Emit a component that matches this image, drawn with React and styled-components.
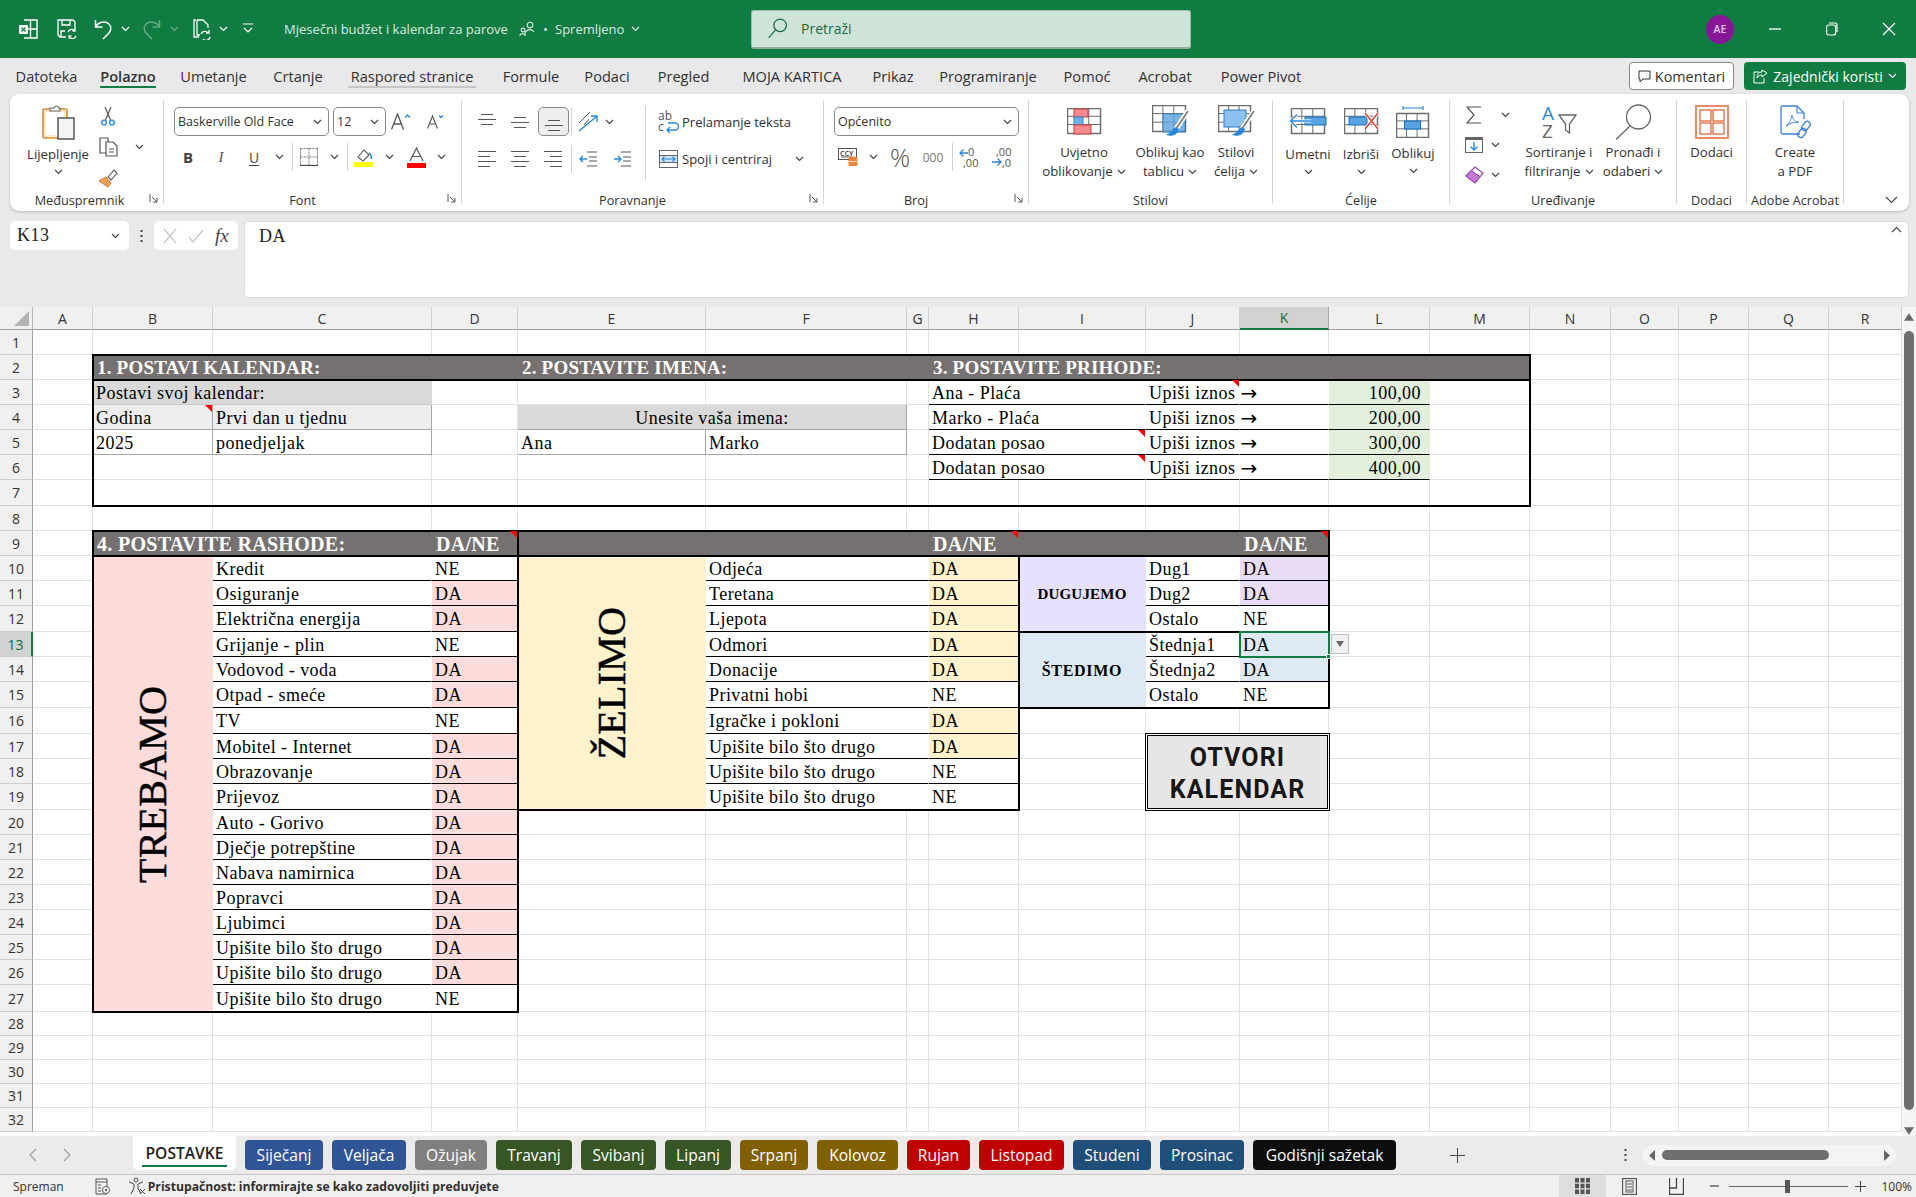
import React from 'react';
import styled, { createGlobalStyle } from 'styled-components';

const UI = '"Open Sans","Noto Sans",sans-serif';
const SERIF = '"Liberation Serif",serif';
const BLUE = '#2b88d8';

const Global = createGlobalStyle`
  html, body { margin: 0; padding: 0; height: 100%; overflow: hidden; background: #e9e8eb; }
  body { font-family: ${UI}; color: #252423; }
  #root { height: 100%; }
  svg { flex-shrink: 0; display: block; }
`;

const Page = styled.div`display:flex;flex-direction:column;width:1916px;height:1197px;background:#e9e8eb;overflow:hidden;`;

/* ---------- title bar ---------- */
const TitleBar = styled.header`flex:0 0 58px;display:flex;align-items:center;background:#107c41;color:#fff;`;
const TitleLeft = styled.div`flex:0 0 751px;display:flex;align-items:center;height:100%;padding-left:10px;box-sizing:border-box;`;
const Slot = styled.div`
  flex:0 0 ${p => p.$w}px;width:${p => p.$w}px;height:${p => p.$h ? p.$h + 'px' : '100%'};
  margin-left:${p => p.$ml || 0}px;display:flex;align-items:center;justify-content:center;box-sizing:border-box;
  ${p => p.$sel ? 'background:#eeeeee;border:1px solid #8a8886;border-radius:5px;' : ''}
  ${p => p.$on ? 'background:#dedede;' : ''}
`;
const DocTitle = styled.span`font-size:13px;color:#dcebe2;white-space:nowrap;margin-left:${p => p.$ml || 0}px;width:${p => p.$w}px;flex:0 0 ${p => p.$w}px;`;
const SearchBox = styled.div`flex:0 0 440px;height:39px;display:flex;align-items:center;gap:13px;padding-left:15px;box-sizing:border-box;background:#cfe4d9;border:1px solid #9dbdab;border-bottom:2px solid #8fb09d;border-radius:3px;font-size:14px;color:#1c6b44;`;
const TitleRight = styled.div`flex:1;display:flex;justify-content:flex-end;height:100%;`;
const Avatar = styled.div`width:28px;height:29px;border-radius:50%;background:#881798;color:#e6c9ea;font-size:10.5px;font-weight:600;display:flex;align-items:center;justify-content:center;`;

/* ---------- ribbon tabs ---------- */
const TabsRow = styled.nav`flex:0 0 36px;display:flex;align-items:center;padding-left:5px;padding-right:10px;box-sizing:border-box;`;
const RibTab = styled.div`flex:0 0 ${p => p.$w}px;display:flex;justify-content:center;font-size:14.6px;line-height:20px;white-space:nowrap;color:#323130;`;
const RibTabLabel = styled.span`
  position:relative;font-weight:${p => p.$on ? 600 : 400};
  ${p => p.$on || p.$hover ? `&::after{content:"";position:absolute;left:${p.$hover ? -3 : 0}px;right:${p.$hover ? -3 : 0}px;bottom:-2px;height:2px;background:${p.$on ? '#107c41' : '#c8c6c4'};}` : ''}
`;
const TabActions = styled.div`margin-left:auto;display:flex;gap:10px;`;
const CommentBtn = styled.div`width:105px;height:28px;box-sizing:border-box;background:#fff;border:1px solid #8a8886;border-radius:4px;display:flex;align-items:center;justify-content:center;gap:4px;font-size:14.4px;color:#323130;`;
const ShareBtn = styled.div`width:162px;height:28px;box-sizing:border-box;background:#107c41;border-radius:4px;display:flex;align-items:center;justify-content:center;gap:5px;font-size:14px;color:#fff;white-space:nowrap;`;

/* ---------- ribbon ---------- */
const Ribbon = styled.section`flex:0 0 117px;margin:0 7px 0 10px;background:#fff;border-radius:9px;box-shadow:0 1px 3px rgba(0,0,0,.22);display:flex;padding-top:6px;box-sizing:border-box;`;
const Group = styled.div`position:relative;flex:0 0 ${p => p.$w}px;height:104px;box-sizing:border-box;border-right:1px solid #d6d6d6;display:flex;flex-direction:column;`;
const GroupBody = styled.div`flex:1;display:flex;padding-left:${p => p.$pl || 0}px;gap:${p => p.$gap || 0}px;min-height:0;`;
const GroupLabel = styled.div`height:14px;line-height:14px;margin-bottom:-3px;padding-right:${p => p.$pr || 0}px;text-align:center;font-size:12.7px;color:#323130;white-space:nowrap;`;
const Launcher = styled.span`position:absolute;right:4px;bottom:0;`;
const Stack = styled.div`display:flex;flex-direction:column;gap:${p => p.$gap || 0}px;padding-top:${p => p.$pt || 0}px;width:${p => p.$w ? p.$w + 'px' : 'auto'};`;
const Line = styled.div`display:flex;align-items:center;height:${p => p.$h || 30}px;`;
const Sep = styled.div`flex:0 0 1px;width:1px;height:${p => p.$h || 28}px;margin:${p => p.$m || '0'};background:#d3d3d3;align-self:${p => p.$self || 'center'};`;
const Combo = styled.div`flex:0 0 ${p => p.$w}px;height:29px;box-sizing:border-box;margin-left:${p => p.$ml || 0}px;border:1px solid #8a8886;border-radius:5px;background:#fff;display:flex;align-items:center;justify-content:space-between;padding:0 6px 0 3px;font-size:12.5px;color:#323130;white-space:nowrap;`;
const Big = styled.div`flex:0 0 ${p => p.$w}px;width:${p => p.$w}px;display:flex;flex-direction:column;align-items:center;`;
const BigIcon = styled.div`height:43px;display:flex;align-items:center;justify-content:center;`;
const BigText = styled.div`height:${p => p.$lh || 19}px;line-height:${p => p.$lh || 19}px;margin-top:${p => p.$mt || 0}px;font-size:13.2px;white-space:nowrap;color:#323130;display:flex;align-items:center;gap:4px;`;
const SmallText = styled.span`font-size:13px;color:#323130;white-space:nowrap;flex:0 0 ${p => p.$w}px;`;
const CollapseArea = styled.div`flex:1;height:104px;display:flex;align-items:flex-end;justify-content:flex-end;padding:0 11px 5px 0;`;

/* ---------- formula bar ---------- */
const FormulaRow = styled.section`flex:0 0 77px;margin:10px 7px 9px 10px;display:flex;gap:5px;`;
const NameBox = styled.div`flex:0 0 119px;height:29px;box-sizing:border-box;background:#fff;border-radius:5px;display:flex;align-items:center;justify-content:space-between;padding:0 9px 0 7px;font:18px ${SERIF};letter-spacing:.45px;color:#222;`;
const FxDots = styled.div`flex:0 0 15px;height:29px;display:flex;align-items:center;justify-content:center;`;
const FxBox = styled.div`flex:0 0 84px;height:29px;box-sizing:border-box;background:#fff;border-radius:5px;display:flex;align-items:center;justify-content:space-around;padding:0 4px;`;
const FxMark = styled.span`font:italic 19px ${SERIF};color:#444;`;
const FormulaInput = styled.div`flex:1;margin-left:1px;background:#fff;border:1px solid #dcdcdc;border-radius:5px;display:flex;align-items:flex-start;justify-content:space-between;padding:4px 6px 0 14px;font:18px ${SERIF};color:#222;box-sizing:border-box;letter-spacing:.45px;`;

/* ---------- sheet ---------- */
const SheetArea = styled.main`flex:0 0 829px;display:flex;background:#fff;`;
const COLS = [33, 60, 120, 219, 86, 188, 201, 22, 90, 127, 94, 89, 101, 100, 81, 68, 70, 80, 73];
const ROWS = [25, 25, 25, 25, 25, 25, 26, 25, 25, 25, 25, 26, 25, 25, 26, 26, 25, 25, 26, 25, 25, 25, 25, 25, 25, 25, 27, 24, 24, 24, 24, 24];
const Sheet = styled.div`
  flex:0 0 1902px;display:grid;overflow:hidden;
  grid-template-columns:${COLS.map(c => c + 'px').join(' ')};
  grid-template-rows:23px ${ROWS.map(r => r + 'px').join(' ')} 1fr;
`;
const Corner = styled.div`grid-area:1 / 1 / 2 / 2;background:#f0f0f0;border-right:1px solid #b5b5b5;border-bottom:1px solid #9e9e9e;display:flex;align-items:flex-end;justify-content:flex-end;padding:0 3px 3px 0;box-sizing:border-box;`;
const ColHead = styled.div`
  background:${p => p.$sel ? '#d2d2d2' : '#f0f0f0'};border-right:1px solid ${p => p.$sel ? '#a8a8a8' : '#cfcfcf'};
  border-bottom:${p => p.$sel ? '2px solid #107c41' : '1px solid #9e9e9e'};box-sizing:border-box;
  display:flex;align-items:center;justify-content:center;font-size:14px;color:${p => p.$sel ? '#0e6b38' : '#333'};
`;
const RowHead = styled.div`
  background:${p => p.$sel ? '#d2d2d2' : '#f0f0f0'};border-right:${p => p.$sel ? '2px solid #107c41' : '1px solid #9e9e9e'};
  border-bottom:1px solid #cfcfcf;box-sizing:border-box;display:flex;align-items:center;justify-content:center;
  font-size:14px;color:${p => p.$sel ? '#0e6b38' : '#333'};
`;
const Cell = styled.div`
  position:relative;box-sizing:border-box;min-width:0;display:flex;align-items:center;white-space:nowrap;
  background:${p => p.$bg || '#fff'};color:${p => p.$fg || '#000'};
  border-right:1px solid ${p => p.$br || (p.$bg ? 'transparent' : '#e1e1e1')};
  border-bottom:1px solid ${p => p.$bb || (p.$bg ? 'transparent' : '#e1e1e1')};
  justify-content:${p => p.$j || 'flex-start'};
  padding:${p => p.$pad || '0 3px'};
  padding-top:2px;
  font:${p => p.$bold ? 'bold' : 'normal'} ${p => p.$size || 18}px ${SERIF};
  letter-spacing:${p => p.$ls ?? 0.45}px;
`;
const Comment = styled.i`position:absolute;top:0;right:0;z-index:3;width:0;height:0;border-left:7px solid transparent;border-top:7px solid #f00;`;
const Frame = styled.div`margin:-1px;border:2px solid #000;z-index:2;pointer-events:none;`;
const Rotated = styled.span`writing-mode:vertical-rl;transform:rotate(180deg);font-size:40px;letter-spacing:.2px;line-height:1;-webkit-text-stroke:.5px #000;`;
const AmountHint = styled.span`display:flex;align-items:center;gap:5px;`;
const ArrowGlyph = styled.span`font:20px/1 "DejaVu Sans",sans-serif;letter-spacing:0;`;
const Selection = styled.div`position:relative;margin:-1px -1px -1px -1px;border:2px solid #107c41;z-index:4;pointer-events:none;&::after{content:"";position:absolute;right:-3px;bottom:-3px;width:5px;height:5px;background:#107c41;border:1px solid #fff;box-sizing:border-box;}`;
const DropBtn = styled.div`position:absolute;left:calc(100% + 3px);top:1px;width:18px;height:20px;box-sizing:border-box;background:#f0f0f0;border:1px solid #bdbdbd;display:flex;align-items:center;justify-content:center;`;
const Shape = styled.div`margin:-1px -1px -1px -1px;padding-top:3px;box-sizing:border-box;z-index:2;background:#e7e6e6;border:1px solid #000;box-shadow:inset 0 0 0 1px #fff,inset 0 0 0 2px #000;display:flex;flex-direction:column;align-items:center;justify-content:center;font:700 25px/32px Roboto,sans-serif;letter-spacing:1.1px;color:#161616;text-align:center;`;
const VScroll = styled.aside`flex:0 0 14px;background:#f6f5f5;display:flex;flex-direction:column;align-items:center;padding:5px 0 0;box-sizing:border-box;height:829px;`;
const VThumb = styled.div`width:10px;margin:9px 0 16px;flex:1;background:#6f6f6f;border-radius:5px;`;

/* ---------- sheet tabs ---------- */
const TabBar = styled.div`flex:0 0 38px;display:flex;align-items:flex-start;background:#ecebea;`;
const ArrowWell = styled.div`flex:0 0 133px;height:100%;display:flex;align-items:center;padding-left:29px;gap:26px;box-sizing:border-box;`;
const ActiveTab = styled.div`flex:0 0 103px;height:34px;box-sizing:border-box;background:#fff;border-radius:0 0 5px 5px;display:flex;align-items:center;justify-content:center;font-size:15.6px;font-weight:600;color:#222;position:relative;&::after{content:"";position:absolute;left:9px;right:9px;bottom:3px;height:2px;background:#107c41;}`;
const ColorTabs = styled.div`display:flex;gap:9px;margin:4px 0 0 9px;`;
const ColorTab = styled.div`flex:0 0 ${p => p.$w}px;height:30px;border-radius:4px;background:${p => p.$c};color:#fff;font-size:15.6px;display:flex;align-items:center;justify-content:center;white-space:nowrap;`;
const TabTail = styled.div`flex:1;height:100%;display:flex;align-items:center;`;
const HScroll = styled.div`width:253px;height:21px;border-radius:11px;background:#f5f4f4;display:flex;align-items:center;justify-content:space-between;padding:0 6px;box-sizing:border-box;gap:4px;margin-left:16px;`;
const HThumb = styled.div`width:167px;height:10px;border-radius:5px;background:#6f6f6f;margin-right:auto;margin-left:3px;`;

/* ---------- status ---------- */
const StatusBar = styled.footer`flex:0 0 23px;display:flex;align-items:center;background:#f1f0f0;border-top:1px solid #c8c6c4;box-sizing:border-box;font-size:12px;color:#323130;`;
const StatusText = styled.span`white-space:nowrap;font-weight:${p => p.$b ? 700 : 400};font-size:${p => p.$b ? 12.2 : 12}px;margin-left:${p => p.$ml || 0}px;`;
const StatusRight = styled.div`margin-left:auto;display:flex;align-items:center;height:100%;padding-right:4px;`;
const ZoomTrack = styled.div`position:relative;width:119px;height:1px;background:#666;margin:0 5px;&::after{content:"";position:absolute;left:56px;top:-6px;width:5px;height:13px;background:#555;}`;

/* ---------- icons ---------- */
const Chev = ({ c = '#444' }) => <svg width="9" height="6" viewBox="0 0 9 6"><path d="M1 1l3.5 3.5L8 1" fill="none" stroke={c} strokeWidth="1.2" /></svg>;
const LaunchIcon = () => <svg width="10" height="10" viewBox="0 0 10 10"><path d="M1 0v8M3 3l5 5M8 4v4H4" fill="none" stroke="#555" strokeWidth="1" /></svg>;
const XlLogo = () => <svg width="19" height="20" viewBox="0 0 19 20" fill="none" stroke="#fff" strokeWidth="1.4"><path d="M5 1h13v18H5M11.5 1v18M5 10h13" /><rect x="0" y="6" width="9" height="9" rx="1" fill="#fff" stroke="none" /><path d="M2.5 8.5l4 4m0-4l-4 4" stroke="#107c41" strokeWidth="1.2" /></svg>;
const SaveSync = () => <svg width="20" height="20" viewBox="0 0 20 20" fill="none" stroke="#fff" strokeWidth="1.3"><path d="M9 18H3L1 16V1h15l2 2v7M5 1v5h8V1M4 18v-6h4" /><path d="M11 13a4 4 0 0 1 7-1M19 17a4 4 0 0 1-7 1M18 9.5V12h-2.5M12 19.5V17h2.5" /></svg>;
const Undo = () => <svg width="18" height="21" viewBox="0 0 18 21" fill="none" stroke="#fff" strokeWidth="1.5"><path d="M1.5 1v7h7M1.5 8C4 3 11 1.5 15 5c3 3 2 7-.5 9.5L9 20" /></svg>;
const Redo = ({ o = 1 }) => <svg width="18" height="21" viewBox="0 0 18 21" fill="none" stroke="#fff" strokeWidth="1.5" opacity={o}><path d="M16.5 1v7h-7M16.5 8C14 3 7 1.5 3 5c-3 3-2 7 .5 9.5L9 20" /></svg>;
const NewSync = () => <svg width="18" height="21" viewBox="0 0 18 21" fill="none" stroke="#fff" strokeWidth="1.3"><path d="M3 1H1v17h5M4 1h6l5 5v3M4 1v15h3" /><path d="M8 15a4 4 0 0 1 7-1M17 18a4 4 0 0 1-7 2M16 11v3h-3" /></svg>;
const CustomQ = () => <svg width="12" height="12" viewBox="0 0 12 12" fill="none" stroke="#fff" strokeWidth="1.2"><path d="M1 1h10M2 5l4 4 4-4" /></svg>;
const Coauthor = () => <svg width="16" height="16" viewBox="0 0 16 16" fill="none" stroke="#dcebe2" strokeWidth="1.1"><circle cx="11" cy="4" r="2.8" /><path d="M6 14v-2a5 5 0 0 1 9-1" /><circle cx="4" cy="9" r="1.9" /><path d="M1 15v-1a3 3 0 0 1 5 0v1" /></svg>;
const Magnifier = () => <svg width="21" height="21" viewBox="0 0 20 20" fill="none" stroke="#1c6b44" strokeWidth="1.2"><circle cx="12.5" cy="7" r="6" /><path d="M8 11.5L1.5 19" /></svg>;
const FindIc = () => <svg width="38" height="36" viewBox="0 0 38 36" fill="none" stroke="#666" strokeWidth="1.3"><circle cx="24.5" cy="13" r="12" /><path d="M16 22L2 35.5" /></svg>;
const WinMin = () => <svg width="12" height="2" viewBox="0 0 12 2"><path d="M0 1h12" stroke="#fff" strokeWidth="1.3" /></svg>;
const WinRestore = () => <svg width="12" height="14" viewBox="0 0 12 14" fill="none" stroke="#fff" strokeWidth="1.2"><rect x=".6" y="3" width="9" height="10" rx="2" /><path d="M3 1h6a2 2 0 0 1 2 2v7" /></svg>;
const WinClose = () => <svg width="14" height="14" viewBox="0 0 14 14"><path d="M1 1l12 12M13 1L1 13" stroke="#fff" strokeWidth="1.2" /></svg>;
const CommentIc = () => <svg width="13" height="13" viewBox="0 0 13 13" fill="none" stroke="#323130" strokeWidth="1"><path d="M1 1h11v8H5l-3 3V9H1z" /></svg>;
const ShareIc = () => <svg width="15" height="15" viewBox="0 0 15 15" fill="none" stroke="#fff" strokeWidth="1"><path d="M6 3H1v11h10V9M14 4L9 1v2c-3 0-5 2-5 6 1-2 3-3 5-3v2z" /></svg>;

const PasteIc = () => <svg width="33" height="36" viewBox="0 0 33 36"><rect x="1" y="5" width="24" height="29" rx="1" fill="#fde9c9" stroke="#d88b36" strokeWidth="1.6" /><rect x="4" y="8" width="18" height="23" fill="#fff" /><path d="M8 6V4h4.5a2 2 0 0 1 4 0H18v3H8z" fill="#fff" stroke="#666" strokeWidth="1.1" /><rect x="16" y="14" width="16" height="21" fill="#f4f4f4" stroke="#555" strokeWidth="1.5" /></svg>;
const ScissorsIc = () => <svg width="16" height="20" viewBox="0 0 16 20" fill="none"><path d="M5 1l5.5 13M11 1L5.5 14" stroke="#555" strokeWidth="1.2" /><circle cx="4" cy="16.5" r="2.4" stroke={BLUE} strokeWidth="1.4" /><circle cx="12" cy="16.5" r="2.4" stroke={BLUE} strokeWidth="1.4" /></svg>;
const CopyIc = () => <svg width="19" height="20" viewBox="0 0 19 20" fill="none" stroke="#555" strokeWidth="1.2"><path d="M7 16H1V1h8v4" /><path d="M7 5h7l4 4v10H7zM10 12h5M10 15h5" /></svg>;
const BrushIc = () => <svg width="20" height="20" viewBox="0 0 20 20"><path d="M1 13l7-4 5 6-3 4z" fill="#f0a15a" stroke="#d9782a" strokeWidth="1" /><path d="M10 9l6-7 3 3-6 7z" fill="#fff" stroke="#555" strokeWidth="1.1" /></svg>;
const GrowA = ({ up }) => up
  ? <svg width="20" height="17" viewBox="0 0 20 17" fill="none"><path d="M.5 16.5L6.5 1l6 15.5M3 11h7" stroke="#555" strokeWidth="1.3" /><path d="M14 4.5l2.5-2.5 2.5 2.5" stroke={BLUE} strokeWidth="1.3" /></svg>
  : <svg width="17" height="15" viewBox="0 0 17 15" fill="none"><path d="M.5 14.5L5.5 2l5 12.5M2.5 10h6" stroke="#555" strokeWidth="1.2" /><path d="M12 1.5l2 2 2-2" stroke={BLUE} strokeWidth="1.3" /></svg>;
const Bold = styled.span`font:700 15px ${UI};color:#444;`;
const Ital = styled.span`font:italic 15px ${SERIF};color:#555;`;
const Under = styled.span`font:14px ${UI};color:#444;text-decoration:underline;text-underline-offset:2px;`;
const BorderIc = () => <svg width="18" height="18" viewBox="0 0 18 18" fill="none" stroke="#777" strokeWidth="1" strokeDasharray="2 1"><path d="M.5.5h17M.5.5v17M17.5.5v17M9 .5v17M.5 9h17" /><path d="M0 17.5h18" stroke="#444" strokeDasharray="none" strokeWidth="1.2" /></svg>;
const FillIc = () => <svg width="20" height="20" viewBox="0 0 20 20" fill="none"><path d="M4 10l6-7 5 5-6 6z" stroke="#555" strokeWidth="1.1" /><path d="M15 6c2 1 3 4 2 6" stroke={BLUE} strokeWidth="1.5" /><rect x="0" y="15" width="19" height="5" fill="#ffff00" /></svg>;
const FontColorIc = () => <svg width="20" height="21" viewBox="0 0 20 21" fill="none"><path d="M3 14L9.5 1 16 14M5.5 9.5h8" stroke="#555" strokeWidth="1.2" /><rect x="0" y="16" width="19" height="5" fill="#f00" /></svg>;
const AlignV = ({ pos }) => { const o = pos === 0 ? 0 : pos === 1 ? 3 : 6; return <svg width="18" height="18" viewBox="0 0 18 18" stroke="#555" strokeWidth="1.2"><path d={`M3 ${1 + o}.5h12M0 ${6 + o}.5h18M3 ${11 + o}.5h12`} /></svg>; };
const AlignH = ({ kind }) => { const l = kind === 'l' ? [0, 18, 0, 12, 0, 18, 0, 12] : kind === 'c' ? [0, 18, 3, 15, 0, 18, 3, 15] : [0, 18, 6, 18, 0, 18, 6, 18]; return <svg width="18" height="18" viewBox="0 0 18 18" stroke="#555" strokeWidth="1.2"><path d={`M${l[0]} 1.5H${l[1]}M${l[2]} 6.5H${l[3]}M${l[4]} 11.5H${l[5]}M${l[6]} 16.5H${l[7]}`} /></svg>; };
const Rotate = () => <svg width="22" height="22" viewBox="0 0 22 22" fill="none"><path d="M2 12L13 1M7 14l5-6" stroke="#555" strokeWidth="1" /><path d="M2 20L19 6M14 5h6v6" stroke={BLUE} strokeWidth="1.4" /></svg>;
const Indent = ({ dir }) => <svg width="18" height="16" viewBox="0 0 18 16" fill="none"><path d="M8 1h10M10 6h8M10 10h8M8 15h10" stroke="#555" strokeWidth="1.2" /><path d={dir === 'l' ? 'M8 8H1M4 5L1 8l3 3' : 'M1 8h7M5 5l3 3-3 3'} stroke={BLUE} strokeWidth="1.4" /></svg>;
const WrapIc = () => <svg width="22" height="24" viewBox="0 0 22 24" fill="none"><text x="1" y="10" fontSize="12" fontFamily="Open Sans" fill="#555">ab</text><text x="1" y="21" fontSize="12" fontFamily="Open Sans" fill="#555">c</text><path d="M11 13h7a3 3 0 0 1 0 7h-8M13 17l-3 3 3 3" stroke={BLUE} strokeWidth="1.3" /></svg>;
const MergeIc = () => <svg width="19" height="18" viewBox="0 0 19 18" fill="none"><rect x=".5" y=".5" width="18" height="17" fill="#fff" stroke="#666" /><path d="M.5 5.5h18M.5 12.5h18" stroke="#666" /><rect x="1" y="6" width="17" height="6" fill="#cfe4f8" /><path d="M3 9h13M5.5 6.5L3 9l2.5 2.5M13.5 6.5L16 9l-2.5 2.5" stroke={BLUE} strokeWidth="1.1" /></svg>;
const CurrencyIc = () => <svg width="20" height="20" viewBox="0 0 20 20" fill="none"><rect x=".5" y="1.5" width="18" height="11" stroke="#555" /><path d="M3 10h11" stroke="#555" /><text x="2" y="9" fontSize="7" fill="#555" fontFamily="Open Sans" fontWeight="700">CCY</text><ellipse cx="15" cy="11.5" rx="4.5" ry="2" fill="#e8853b" /><rect x="10.5" y="11.5" width="9" height="7.5" rx="1.5" fill="#e8853b" /><path d="M11 14.5h8" stroke="#fff" strokeWidth=".7" /></svg>;
const PercentText = styled.span`font:300 25px ${UI};color:#555;`;
const ThousText = styled.span`font:12px ${UI};color:#777;`;
const DecIc = ({ inc }) => <svg width="20" height="21" viewBox="0 0 20 21" fill="none">
  <text x={inc ? 4 : 9} y="9" fontSize="11" fill="#555" fontFamily="Open Sans">{inc ? ',00' : '0'}</text>
  <text x={inc ? 10 : 4} y="20" fontSize="11" fill="#555" fontFamily="Open Sans">{inc ? ',0' : ',00'}</text>
  <path d={inc ? 'M0 15h9M5.5 11.5L9 15l-3.5 3.5' : 'M1 6h8M4.5 2.5L1 6l3.5 3.5'} stroke={BLUE} strokeWidth="1.3" />
</svg>;

const TableBase = ({ w = 33, h = 25, x = 0, y = 0 }) => <g fill="none" stroke="#6d6d6d" strokeWidth="1"><rect x={x + .5} y={y + .5} width={w} height={h} strokeWidth="1.5" /><path d={`M${x + w * .33} ${y}v${h}M${x + w * .66} ${y}v${h}M${x} ${y + h * .33}h${w}M${x} ${y + h * .66}h${w}`} /></g>;
const CondIc = () => <svg width="35" height="27" viewBox="0 0 35 27"><TableBase /><rect x="7" y="1" width="14" height="8" fill="#f58b90" stroke="#d13438" /><rect x="7" y="9" width="9" height="8" fill="#6fb1e6" stroke="#2b88d8" /><rect x="7" y="17" width="17" height="9" fill="#f58b90" stroke="#d13438" /></svg>;
const Paintbrush = () => <g><path d="M36 6L24 24" stroke="#fff" strokeWidth="5" /><path d="M36 6L24 24" stroke="#777" strokeWidth="1.5" /><path d="M24 22c-3 1-4 5-10 8 6 2 12 0 13-6z" fill={BLUE} /></g>;
const TableStyleIc = () => <svg width="37" height="33" viewBox="0 0 37 33"><TableBase w={33} h={26} /><rect x="11" y="9" width="22" height="18" fill="#5ba3e0" opacity=".8" stroke="#2b7cc4" /><Paintbrush /></svg>;
const CellStyleIc = () => <svg width="37" height="33" viewBox="0 0 37 33"><TableBase w={32} h={26} /><rect x="6" y="5" width="22" height="17" fill="#8cc0ee" stroke="#2b7cc4" /><Paintbrush /></svg>;
const InsertIc = () => <svg width="38" height="27" viewBox="0 0 38 27"><TableBase w={33} h={25} x={2} /><rect x="16" y="9" width="21" height="8" fill="#5ba3e0" stroke="#106ebe" /><path d="M22 13H2M8 6.5L1.5 13 8 19.5" fill="none" stroke="#fff" strokeWidth="3" /><path d="M22 13H2M8 6.5L1.5 13 8 19.5" fill="none" stroke={BLUE} strokeWidth="1.3" /></svg>;
const DeleteIc = () => <svg width="35" height="27" viewBox="0 0 35 27"><TableBase w={33} h={25} /><rect x="5" y="9" width="18" height="8" fill="#5ba3e0" stroke="#106ebe" /><path d="M21 5l13 16M34 5L21 21" stroke="#fff" strokeWidth="3" /><path d="M21 5l13 16M34 5L21 21" stroke="#e0403f" strokeWidth="1.4" /></svg>;
const FormatIc = () => <svg width="34" height="33" viewBox="0 0 34 33"><path d="M7 1v4M27 1v4M7 3h20" stroke={BLUE} strokeWidth="1.2" fill="none" /><TableBase w={32} h={24} y={8} /><rect x="8.5" y="16" width="16" height="8" fill="#5ba3e0" stroke="#106ebe" /></svg>;
const SigmaIc = () => <svg width="16" height="18" viewBox="0 0 16 18" fill="none" stroke="#555" strokeWidth="1.2"><path d="M15 1H1l7 8-7 8h14" /></svg>;
const FillDownIc = () => <svg width="18" height="16" viewBox="0 0 18 16" fill="none"><rect x=".5" y=".5" width="17" height="15" fill="#fff" stroke="#666" /><rect x="0" y="0" width="18" height="3" fill="#666" /><path d="M9 5v8M5.5 9.5L9 13l3.5-3.5" stroke={BLUE} strokeWidth="1.4" /></svg>;
const EraserIc = () => <svg width="19" height="18" viewBox="0 0 19 18"><path d="M10 1l8 6-8 10-9-7z" fill="#fff" stroke="#9a3fb0" strokeWidth="1.2" /><path d="M1 10l5-5.5 9 6L10 17z" fill="#c27ad2" stroke="#9a3fb0" /></svg>;
const SortIc = () => <svg width="35" height="34" viewBox="0 0 35 34"><text x="0" y="15" fontSize="19" fontFamily="Open Sans" fill={BLUE}>A</text><text x="0" y="33" fontSize="19" fontFamily="Open Sans" fill="#666">Z</text><path d="M17 10h17l-6.5 9v9l-4-3v-6z" fill="#fff" stroke="#666" strokeWidth="1.3" /></svg>;
const AddinsIc = () => <svg width="34" height="34" viewBox="0 0 34 34" fill="none"><rect x="1" y="1" width="32" height="32" fill="#fff" stroke="#ea8a6b" strokeWidth="2" /><rect x="5" y="5" width="11" height="11" stroke="#d83b01" strokeWidth="1" /><rect x="18" y="5" width="11" height="11" stroke="#d83b01" strokeWidth="1" /><rect x="5" y="18" width="11" height="11" stroke="#d83b01" strokeWidth="1" /><rect x="18" y="18" width="11" height="11" stroke="#d83b01" strokeWidth="1" /></svg>;
const PdfIc = () => <svg width="31" height="34" viewBox="0 0 31 34" fill="none"><path d="M20 29H3a2 2 0 0 1-2-2V3a2 2 0 0 1 2-2h14l7 7v6" stroke="#3a7fe0" strokeWidth="1.3" /><path d="M17 1v7h7" stroke="#3a7fe0" strokeWidth="1.1" /><path d="M6 21c3-1 5-6 6-11 1 5 3 7 7 7-4 0-9 1-13 4z" stroke="#4b87e0" strokeWidth="1" /><rect x="19" y="23" width="6" height="10" rx="3" transform="rotate(40 22 28)" stroke="#3a7fe0" strokeWidth="1.3" /><rect x="23" y="16" width="6" height="10" rx="3" transform="rotate(40 26 21)" stroke="#3a7fe0" strokeWidth="1.3" /></svg>;
const XMark = () => <svg width="14" height="16" viewBox="0 0 14 16"><path d="M1 1l12 14M13 1L1 15" stroke="#c6c6c6" strokeWidth="1.2" /></svg>;
const CheckMark = () => <svg width="16" height="14" viewBox="0 0 16 14" fill="none"><path d="M1 8l4 5L15 1" stroke="#c6c6c6" strokeWidth="1.2" /></svg>;
const Dots = ({ c = '#444' }) => <svg width="3" height="14" viewBox="0 0 3 14" fill={c}><rect width="2" height="2" y="1" x=".5" /><rect width="2" height="2" y="6" x=".5" /><rect width="2" height="2" y="11" x=".5" /></svg>;
const CornerTri = () => <svg width="15" height="15" viewBox="0 0 15 15"><path d="M15 0v15H0z" fill="#b3b3b3" /></svg>;
const DownTri = ({ c = '#666', s = 8 }) => <svg width={s} height={s} viewBox="0 0 8 8"><path d="M0 1h8L4 7z" fill={c} /></svg>;
const UpTri = ({ c = '#666', s = 10 }) => <svg width={s} height={s} viewBox="0 0 8 8"><path d="M0 7h8L4 1z" fill={c} /></svg>;
const UpChev = () => <svg width="11" height="7" viewBox="0 0 11 7" fill="none"><path d="M1 6l4.5-4.5L10 6" stroke="#444" strokeWidth="1.1" /></svg>;
const DownChevBig = () => <svg width="13" height="8" viewBox="0 0 13 8" fill="none"><path d="M1 1l5.5 5.5L12 1" stroke="#444" strokeWidth="1.1" /></svg>;
const NavArrow = ({ right }) => <svg width="8" height="14" viewBox="0 0 8 14" fill="none"><path d={right ? 'M1 1l6 6-6 6' : 'M7 1L1 7l6 6'} stroke="#9a9a9a" strokeWidth="1.1" /></svg>;
const PlusIc = () => <svg width="15" height="15" viewBox="0 0 15 15"><path d="M7.5 0v15M0 7.5h15" stroke="#444" strokeWidth="1" /></svg>;
const HArrow = ({ right }) => <svg width="6" height="11" viewBox="0 0 6 11"><path d={right ? 'M0 0l6 5.5L0 11z' : 'M6 0L0 5.5 6 11z'} fill="#666" /></svg>;
const MacroIc = () => <svg width="16" height="17" viewBox="0 0 16 17" fill="none" stroke="#555"><path d="M1 1h11v15H1zM1 4h11M3 7h3M3 10h3M3 13h3" /><circle cx="11" cy="12" r="3.5" fill="#fff" /><circle cx="11" cy="12" r="1.2" fill="#555" stroke="none" /></svg>;
const AccessIc = () => <svg width="18" height="18" viewBox="0 0 18 18" fill="none" stroke="#444" strokeWidth="1"><circle cx="8" cy="3" r="2" /><path d="M1 5l5 2v4l-3 6M15 5l-5 2v4l3 6" /><path d="M12 12l5 5m0-5l-5 5" /></svg>;
const ViewNormal = () => <svg width="15" height="16" viewBox="0 0 15 16" fill="#555"><path d="M0 0h4v4.5H0zM5.5 0h4v4.5h-4zM11 0h4v4.5h-4zM0 5.7h4v4.5H0zM5.5 5.7h4v4.5h-4zM11 5.7h4v4.5h-4zM0 11.4h4V16H0zM5.5 11.4h4V16h-4zM11 11.4h4V16h-4z" /></svg>;
const ViewPage = () => <svg width="15" height="17" viewBox="0 0 15 17" fill="none" stroke="#555"><rect x=".5" y=".5" width="14" height="16" strokeWidth="1.3" /><rect x="4" y="3" width="7" height="11" /><path d="M5 6h5M5 9h5M5 12h5" /></svg>;
const ViewBreak = () => <svg width="15" height="17" viewBox="0 0 15 17" fill="none" stroke="#444" strokeWidth="1.3"><path d="M.5 0v16.5h14V0M.5 10h7V0" /></svg>;
const MiniMinus = () => <svg width="9" height="2"><path d="M0 1h9" stroke="#444" strokeWidth="1.2" /></svg>;
const MiniPlus = () => <svg width="11" height="11"><path d="M5.5 0v11M0 5.5h11" stroke="#444" strokeWidth="1" /></svg>;

/* ---------- sheet data ---------- */
const colNo = l => l.charCodeAt(0) - 63;
const parse = a => {
  const [s, e = s] = a.split(':');
  return { c1: colNo(s[0]), r1: +s.slice(1) + 1, c2: colNo(e[0]) + 1, r2: +e.slice(1) + 2 };
};
const grid = a => { const p = parse(a); return `${p.r1} / ${p.c1} / ${p.r2} / ${p.c2}`; };

const DARK = '#767171';
const BK = '#000';
const GR = '#a6a6a6';
const PINK = '#ffdcdc', CREAM = '#fff2cc', LILAC = '#e5e1ff', SKY = '#ddeaf6', VIOLET = '#e9dcf5', MINT = '#e2efda';

const C = (area, text, o = {}) => ({ area, text, ...o });
const head = { bg: DARK, fg: '#fff', bold: true, bb: BK, br: DARK, pad: '0 3px 0 4px', ls: 0.2, size: 19 };
const head9 = { ...head, size: 20, ls: 0.3 };
const cellData = [
  C('B2:D2', '1. POSTAVI KALENDAR:', head),
  C('E2:G2', '2. POSTAVITE IMENA:', head),
  C('H2:M2', '3. POSTAVITE PRIHODE:', head),
  C('B3:C3', 'Postavi svoj kalendar:', { bg: '#d9d9d9', bb: '#c8c8c8', br: '#d9d9d9' }),
  C('B4', 'Godina', { bg: '#ededed', bb: GR, br: GR, note: true }),
  C('C4', 'Prvi dan u tjednu', { bg: '#ededed', bb: GR, br: GR }),
  C('B5', '2025', { bb: GR, br: GR }),
  C('C5', 'ponedjeljak', { bb: GR, br: GR }),
  C('E4:F4', 'Unesite vaša imena:', { bg: '#d9d9d9', bb: GR, br: GR, j: 'center' }),
  C('E5', 'Ana', { bb: GR, br: GR }),
  C('F5', 'Marko', { bb: GR, br: GR }),
  C('B9:C9', '4. POSTAVITE RASHODE:', head9),
  C('D9', 'DA/NE', { ...head9, note: true }),
  C('E9:G9', '', head9),
  C('H9', 'DA/NE', { ...head9, note: true }),
  C('I9:J9', '', head9),
  C('K9', 'DA/NE', { ...head9, note: true }),
  C('B10:B27', <Rotated>TREBAMO</Rotated>, { bg: PINK, j: 'center', br: PINK }),
  C('E10:E19', <Rotated>ŽELIMO</Rotated>, { bg: CREAM, j: 'center', br: CREAM }),
  C('I10:I12', 'DUGUJEMO', { bg: LILAC, j: 'center', bold: true, size: 15, ls: 0.2 }),
  C('I13:I15', 'ŠTEDIMO', { bg: SKY, j: 'center', bold: true, size: 16, ls: 0.7 }),
];

[['Ana - Plaća', '100,00'], ['Marko - Plaća', '200,00'], ['Dodatan posao', '300,00'], ['Dodatan posao', '400,00']].forEach(([n, v], i) => {
  const r = 3 + i;
  cellData.push(C(`H${r}:I${r}`, n, { bb: BK, br: 'transparent', note: i > 1 }));
  cellData.push(C(`J${r}`, <AmountHint><span>Upiši iznos</span><ArrowGlyph>→</ArrowGlyph></AmountHint>, { bb: BK, br: 'transparent', note: i === 0 }));
  cellData.push(C(`K${r}`, '', { bb: BK, br: 'transparent', bg: 'transparent' }));
  cellData.push(C(`L${r}`, v, { bg: MINT, bb: BK, j: 'flex-end', pad: '0 8px 0 0' }));
});

const yesNo = (list, start, labelArea, valCol, tint, lastRow) => list.forEach(([n, v], i) => {
  const r = start + i;
  const bb = r === lastRow ? 'transparent' : BK;
  cellData.push(C(labelArea(r), n, { bb, br: 'transparent', pad: '0 3px 0 3px' }));
  cellData.push(C(`${valCol}${r}`, v, { bb, br: 'transparent', bg: v === 'DA' ? tint : undefined }));
});
yesNo([['Kredit', 'NE'], ['Osiguranje', 'DA'], ['Električna energija', 'DA'], ['Grijanje - plin', 'NE'], ['Vodovod - voda', 'DA'], ['Otpad - smeće', 'DA'], ['TV', 'NE'], ['Mobitel - Internet', 'DA'], ['Obrazovanje', 'DA'], ['Prijevoz', 'DA'], ['Auto - Gorivo', 'DA'], ['Dječje potrepštine', 'DA'], ['Nabava namirnica', 'DA'], ['Popravci', 'DA'], ['Ljubimci', 'DA'], ['Upišite bilo što drugo', 'DA'], ['Upišite bilo što drugo', 'DA'], ['Upišite bilo što drugo', 'NE']], 10, r => `C${r}`, 'D', PINK, 27);
yesNo([['Odjeća', 'DA'], ['Teretana', 'DA'], ['Ljepota', 'DA'], ['Odmori', 'DA'], ['Donacije', 'DA'], ['Privatni hobi', 'NE'], ['Igračke i pokloni', 'DA'], ['Upišite bilo što drugo', 'DA'], ['Upišite bilo što drugo', 'NE'], ['Upišite bilo što drugo', 'NE']], 10, r => `F${r}:G${r}`, 'H', CREAM, 19);
yesNo([['Dug1', 'DA'], ['Dug2', 'DA'], ['Ostalo', 'NE']], 10, r => `J${r}`, 'K', VIOLET, 12);
yesNo([['Štednja1', 'DA'], ['Štednja2', 'DA'], ['Ostalo', 'NE']], 13, r => `J${r}`, 'K', SKY, 15);

const occupied = new Set();
cellData.forEach(d => {
  const p = parse(d.area);
  for (let r = p.r1; r < p.r2; r++) for (let c = p.c1; c < p.c2; c++) occupied.add(`${r}-${c}`);
});
const emptyCells = [];
for (let r = 2; r <= 33; r++) for (let c = 2; c <= 19; c++) if (!occupied.has(`${r}-${c}`)) emptyCells.push({ r, c });

const FRAMES = ['B2:M7', 'B2:M2', 'B9:K9', 'B9:D27', 'E10:H19', 'I10:K15', 'I10:K12'];
const LETTERS = 'ABCDEFGHIJKLMNOPQR'.split('');
const RIB_TABS = [['Datoteka', 83], ['Polazno', 80, 'on'], ['Umetanje', 91], ['Crtanje', 78], ['Raspored stranice', 150, 'hover'], ['Formule', 88], ['Podaci', 64], ['Pregled', 89], ['MOJA KARTICA', 128], ['Prikaz', 74], ['Programiranje', 116], ['Pomoć', 82], ['Acrobat', 74], ['Power Pivot', 118]];
const SHEETS = [['Siječanj', 78, '#2f5597'], ['Veljača', 74, '#2f5597'], ['Ožujak', 72, '#7f7f7f'], ['Travanj', 76, '#375623'], ['Svibanj', 75, '#375623'], ['Lipanj', 66, '#375623'], ['Srpanj', 68, '#806000'], ['Kolovoz', 81, '#806000'], ['Rujan', 63, '#c00000'], ['Listopad', 85, '#c00000'], ['Studeni', 78, '#1f4e79'], ['Prosinac', 84, '#1f4e79'], ['Godišnji sažetak', 143, '#0d0d0d']];

const BigButton = ({ w, icon, lines, mt, lh }) => (
  <Big $w={w}>
    <BigIcon>{icon}</BigIcon>
    {lines.map((l, i) => <BigText key={i} $mt={i === 0 ? mt : 0} $lh={lh}>{l}</BigText>)}
  </Big>
);

export default function App() {
  return (
    <Page>
      <Global />
      <TitleBar>
        <TitleLeft>
          <Slot $w={37}><XlLogo /></Slot>
          <Slot $w={39}><SaveSync /></Slot>
          <Slot $w={34}><Undo /></Slot>
          <Slot $w={10}><Chev c="#fff" /></Slot>
          <Slot $w={43}><Redo o={.35} /></Slot>
          <Slot $w={2}><Chev c="#6fae8c" /></Slot>
          <Slot $w={33} $ml={10}><NewSync /></Slot>
          <Slot $w={10}><Chev c="#fff" /></Slot>
          <Slot $w={40}><CustomQ /></Slot>
          <DocTitle $ml={16} $w={235}>Mjesečni budžet i kalendar za parove</DocTitle>
          <Slot $w={16}><Coauthor /></Slot>
          <DocTitle $ml={8} $w={9}>•</DocTitle>
          <DocTitle $ml={3} $w={75}>Spremljeno</DocTitle>
          <Slot $w={10}><Chev c="#dcebe2" /></Slot>
        </TitleLeft>
        <SearchBox><Magnifier />Pretraži</SearchBox>
        <TitleRight>
          <Slot $w={56}><Avatar>AE</Avatar></Slot>
          <Slot $w={54}><WinMin /></Slot>
          <Slot $w={60}><WinRestore /></Slot>
          <Slot $w={54}><WinClose /></Slot>
        </TitleRight>
      </TitleBar>

      <TabsRow>
        {RIB_TABS.map(([t, w, k]) => <RibTab key={t} $w={w}><RibTabLabel $on={k === 'on'} $hover={k === 'hover'}>{t}</RibTabLabel></RibTab>)}
        <TabActions>
          <CommentBtn><CommentIc />Komentari</CommentBtn>
          <ShareBtn><ShareIc />Zajednički koristi<Chev c="#fff" /></ShareBtn>
        </TabActions>
      </TabsRow>

      <Ribbon>
        <Group $w={154}>
          <GroupBody $pl={15} $gap={5}>
            <BigButton w={66} icon={<PasteIc />} mt={2} lh={18} lines={['Lijepljenje', <Chev />]} />
            <Stack>
              <Line $h={31}><Slot $w={24}><ScissorsIc /></Slot></Line>
              <Line $h={31}><Slot $w={24}><CopyIc /></Slot><Slot $w={38}><Chev /></Slot></Line>
              <Line $h={31}><Slot $w={24}><BrushIc /></Slot></Line>
            </Stack>
          </GroupBody>
          <GroupLabel $pr={14}>Međuspremnik</GroupLabel>
          <Launcher><LaunchIcon /></Launcher>
        </Group>

        <Group $w={298}>
          <GroupBody $pl={10}>
            <Stack $pt={7} $gap={6}>
              <Line $h={29}>
                <Combo $w={155}>Baskerville Old Face<Chev /></Combo>
                <Combo $w={53} $ml={4}>12<Chev /></Combo>
                <Slot $w={30}><GrowA up /></Slot>
                <Slot $w={38}><GrowA /></Slot>
              </Line>
              <Line $h={30}>
                <Slot $w={28}><Bold>B</Bold></Slot>
                <Slot $w={38}><Ital>I</Ital></Slot>
                <Slot $w={28}><Under>U</Under></Slot>
                <Slot $w={22}><Chev /></Slot>
                <Sep $m="0 0 0 2px" />
                <Slot $w={32}><BorderIc /></Slot>
                <Slot $w={18}><Chev /></Slot>
                <Sep $m="0 0 0 4px" />
                <Slot $w={32}><FillIc /></Slot>
                <Slot $w={18}><Chev /></Slot>
                <Slot $w={38}><FontColorIc /></Slot>
                <Slot $w={10}><Chev /></Slot>
              </Line>
            </Stack>
          </GroupBody>
          <GroupLabel $pr={20}>Font</GroupLabel>
          <Launcher><LaunchIcon /></Launcher>
        </Group>

        <Group $w={362}>
          <GroupBody $pl={8}>
            <Stack $pt={7} $gap={8} $w={175}>
              <Line $h={29}>
                <Slot $w={33}><AlignV pos={0} /></Slot>
                <Slot $w={33}><AlignV pos={1} /></Slot>
                <Slot $w={31} $ml={2} $sel><AlignV pos={2} /></Slot>
                <Sep $m="0 0 0 2px" />
                <Slot $w={32}><Rotate /></Slot>
                <Slot $w={10}><Chev /></Slot>
              </Line>
              <Line $h={30}>
                <Slot $w={33}><AlignH kind="l" /></Slot>
                <Slot $w={33}><AlignH kind="c" /></Slot>
                <Slot $w={33}><AlignH kind="r" /></Slot>
                <Sep $m="0 0 0 2px" />
                <Slot $w={32}><Indent dir="l" /></Slot>
                <Slot $w={36}><Indent dir="r" /></Slot>
              </Line>
            </Stack>
            <Sep $h={74} $self="flex-start" $m="6px 0 0 0" />
            <Stack $pt={7} $gap={8}>
              <Line $h={29}>
                <Slot $w={28} $ml={8}><WrapIc /></Slot>
                <SmallText $w={120}>Prelamanje teksta</SmallText>
              </Line>
              <Line $h={30}>
                <Slot $w={28} $ml={8}><MergeIc /></Slot>
                <SmallText $w={108}>Spoji i centriraj</SmallText>
                <Slot $w={18}><Chev /></Slot>
              </Line>
            </Stack>
          </GroupBody>
          <GroupLabel $pr={20}>Poravnanje</GroupLabel>
          <Launcher><LaunchIcon /></Launcher>
        </Group>

        <Group $w={205}>
          <GroupBody $pl={10}>
            <Stack $pt={7} $gap={6}>
              <Line $h={29}><Combo $w={185}>Općenito<Chev /></Combo></Line>
              <Line $h={30}>
                <Slot $w={28}><CurrencyIc /></Slot>
                <Slot $w={22}><Chev /></Slot>
                <Slot $w={32}><PercentText>%</PercentText></Slot>
                <Slot $w={34}><ThousText>000</ThousText></Slot>
                <Sep $m="0 0 0 2px" />
                <Slot $w={32}><DecIc /></Slot>
                <Slot $w={33}><DecIc inc /></Slot>
              </Line>
            </Stack>
          </GroupBody>
          <GroupLabel $pr={20}>Broj</GroupLabel>
          <Launcher><LaunchIcon /></Launcher>
        </Group>

        <Group $w={244}>
          <GroupBody $pl={3}>
            <BigButton w={104} icon={<CondIc />} lines={['Uvjetno', <>oblikovanje <Chev /></>]} />
            <BigButton w={68} icon={<TableStyleIc />} lines={['Oblikuj kao', <>tablicu <Chev /></>]} />
            <Slot $w={4} />
            <BigButton w={56} icon={<CellStyleIc />} lines={['Stilovi', <>ćelija <Chev /></>]} />
          </GroupBody>
          <GroupLabel>Stilovi</GroupLabel>
        </Group>

        <Group $w={177}>
          <GroupBody $pl={9}>
            <BigButton w={52} mt={2} lh={18} icon={<InsertIc />} lines={['Umetni', <Chev />]} />
            <BigButton w={54} mt={2} lh={18} icon={<DeleteIc />} lines={['Izbriši', <Chev />]} />
            <BigButton w={50} mt={1} lh={18} icon={<FormatIc />} lines={['Oblikuj', <Chev />]} />
          </GroupBody>
          <GroupLabel>Ćelije</GroupLabel>
        </Group>

        <Group $w={227}>
          <GroupBody $pl={6}>
            <Stack $w={64}>
              <Line $h={30}><Slot $w={36}><SigmaIc /></Slot><Slot $w={26}><Chev /></Slot></Line>
              <Line $h={30}><Slot $w={36}><FillDownIc /></Slot><Slot $w={6}><Chev /></Slot></Line>
              <Line $h={30}><Slot $w={36}><EraserIc /></Slot><Slot $w={6}><Chev /></Slot></Line>
            </Stack>
            <BigButton w={78} icon={<SortIc />} lines={['Sortiranje i', <>filtriranje <Chev /></>]} />
            <BigButton w={70} icon={<FindIc />} lines={['Pronađi i', <>odaberi <Chev /></>]} />
          </GroupBody>
          <GroupLabel>Uređivanje</GroupLabel>
        </Group>

        <Group $w={70}>
          <GroupBody><BigButton w={69} icon={<AddinsIc />} lines={['Dodaci']} /></GroupBody>
          <GroupLabel>Dodaci</GroupLabel>
        </Group>

        <Group $w={97}>
          <GroupBody><BigButton w={96} icon={<PdfIc />} lines={['Create', 'a PDF']} /></GroupBody>
          <GroupLabel>Adobe Acrobat</GroupLabel>
        </Group>

        <CollapseArea><DownChevBig /></CollapseArea>
      </Ribbon>

      <FormulaRow>
        <NameBox>K13<Chev /></NameBox>
        <FxDots><Dots /></FxDots>
        <FxBox><XMark /><CheckMark /><FxMark>fx</FxMark></FxBox>
        <FormulaInput>DA<UpChev /></FormulaInput>
      </FormulaRow>

      <SheetArea>
        <Sheet>
          <Corner><CornerTri /></Corner>
          {LETTERS.map((l, i) => <ColHead key={l} $sel={l === 'K'} style={{ gridArea: `1 / ${i + 2} / 2 / ${i + 3}` }}>{l}</ColHead>)}
          {ROWS.map((_, i) => <RowHead key={i} $sel={i === 12} style={{ gridArea: `${i + 2} / 1 / ${i + 3} / 2` }}>{i + 1}</RowHead>)}
          {emptyCells.map(({ r, c }) => <Cell key={`e${r}-${c}`} style={{ gridArea: `${r} / ${c} / ${r + 1} / ${c + 1}` }} />)}
          {cellData.map(d => (
            <Cell key={d.area} style={{ gridArea: grid(d.area) }} $bg={d.bg} $fg={d.fg} $bold={d.bold} $bb={d.bb} $br={d.br} $j={d.j} $pad={d.pad} $size={d.size} $ls={d.ls}>
              {d.text}{d.note ? <Comment /> : null}
            </Cell>
          ))}
          {FRAMES.map(f => <Frame key={f} style={{ gridArea: grid(f) }} />)}
          <Shape style={{ gridArea: grid('J17:K19') }}><span>OTVORI</span><span>KALENDAR</span></Shape>
          <Selection style={{ gridArea: grid('K13') }}><DropBtn><DownTri /></DropBtn></Selection>
        </Sheet>
        <VScroll>
          <UpTri />
          <VThumb />
          <DownTri c="#666" s={10} />
        </VScroll>
      </SheetArea>

      <TabBar>
        <ArrowWell><NavArrow /><NavArrow right /></ArrowWell>
        <ActiveTab>POSTAVKE</ActiveTab>
        <ColorTabs>
          {SHEETS.map(([n, w, c]) => <ColorTab key={n} $w={w} $c={c}>{n}</ColorTab>)}
        </ColorTabs>
        <TabTail>
          <Slot $w={15} $ml={54}><PlusIc /></Slot>
          <Slot $w={3} $ml={159}><Dots /></Slot>
          <HScroll><HArrow /><HThumb /><HArrow right /></HScroll>
        </TabTail>
      </TabBar>

      <StatusBar>
        <StatusText $ml={13}>Spreman</StatusText>
        <Slot $w={16} $ml={31}><MacroIc /></Slot>
        <Slot $w={18} $ml={17}><AccessIc /></Slot>
        <StatusText $b $ml={2}>Pristupačnost: informirajte se kako zadovoljiti preduvjete</StatusText>
        <StatusRight>
          <Slot $w={47} $on><ViewNormal /></Slot>
          <Slot $w={47}><ViewPage /></Slot>
          <Slot $w={47}><ViewBreak /></Slot>
          <Slot $w={20} $ml={4}><MiniMinus /></Slot>
          <ZoomTrack />
          <Slot $w={14}><MiniPlus /></Slot>
          <StatusText $ml={14}>100%</StatusText>
        </StatusRight>
      </StatusBar>
    </Page>
  );
}
